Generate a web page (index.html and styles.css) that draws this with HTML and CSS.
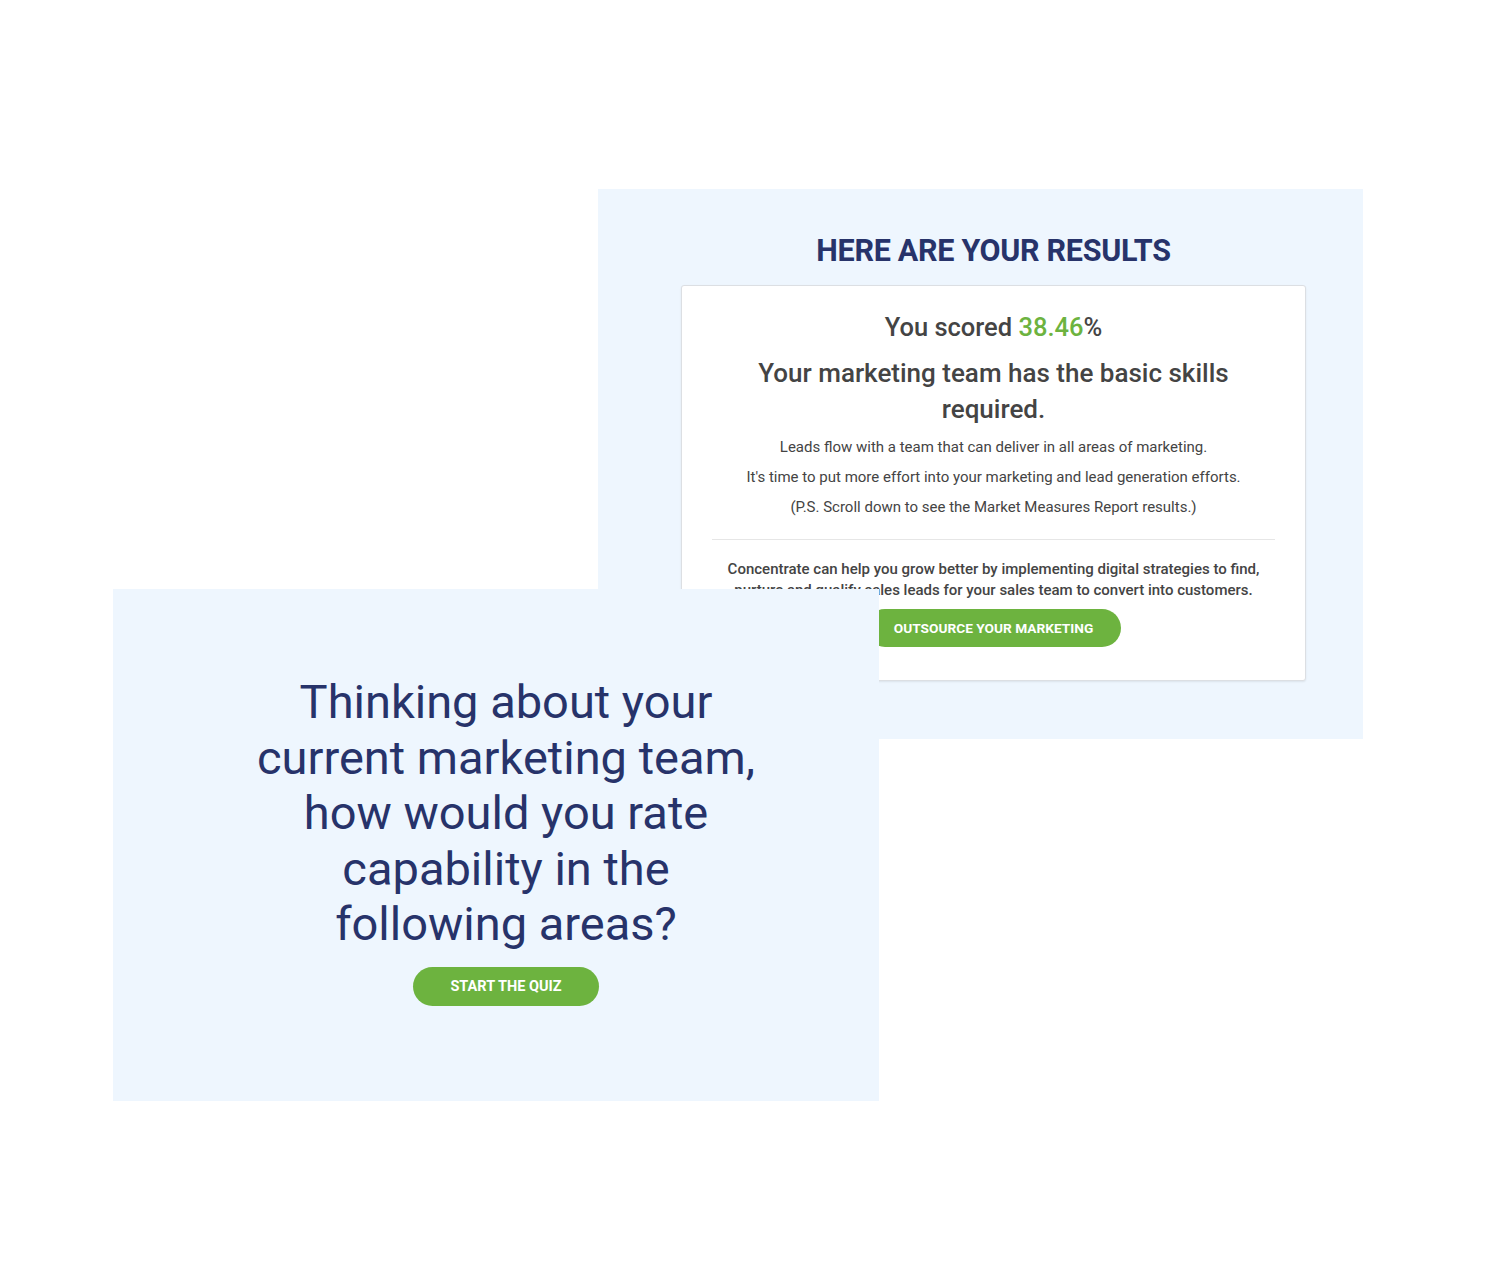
FILE: index.html
```html
<!DOCTYPE html>
<html>
<head>
    <meta charset="utf-8" />
    <title>Marketing Team Quiz</title>
    <link rel="stylesheet" href="styles.css">
</head>
<body>
<div class="stage">
    <section class="results">
        <h2 class="results-title">HERE ARE YOUR RESULTS</h2>
        <div class="results-card">
            <p class="score">You scored <span class="score-num">38.46</span>%</p>
            <h3 class="verdict">Your marketing team has the basic skills required.</h3>
            <p class="note">Leads flow with a team that can deliver in all areas of marketing.</p>
            <p class="note">It's time to put more effort into your marketing and lead generation efforts.</p>
            <p class="note">(P.S. Scroll down to see the Market Measures Report results.)</p>
            <hr class="divider">
            <p class="pitch">Concentrate can help you grow better by implementing digital strategies to find, nurture and qualify sales leads for your sales team to convert into customers.</p>
            <a class="btn" href="#">OUTSOURCE YOUR MARKETING</a>
        </div>
    </section>

    <section class="intro">
        <h1 class="intro-title">Thinking about your current marketing team, how would you rate capability in the following areas?</h1>
        <a class="btn btn-quiz" href="#">START THE QUIZ</a>
    </section>
</div>
</body>
</html>
```

FILE: styles.css
```css
html {
    background: #fff;
}

body {
    margin: 0;
    font-family: Roboto, "Liberation Sans", sans-serif;
    color: #444;
}

/* two panels on one canvas, the intro panel laid over the results panel */
.stage {
    display: grid;
    grid-template-columns: 113px 485px 281px 484px;
    grid-template-rows: 189px 400px 150px 362px;
}

.results {
    grid-column: 3 / 5;
    grid-row: 2 / 4;
    background: #eef6fe;
    padding: 43px 57px 0 83px;
    text-align: center;
}

.results-title {
    margin: 0 0 15px;
    font-size: 30.5px;
    line-height: 38px;
    font-weight: 700;
    color: #27336a;
    letter-spacing: -0.3px;
}

.results-card {
    background: #fff;
    border: 1px solid #dcdfe3;
    border-radius: 3px;
    box-shadow: 0 1px 2px rgba(0, 0, 0, 0.08);
    padding: 24px 30px 32px;
    height: 396px;
    box-sizing: border-box;
}

.score {
    margin: 0 0 11px;
    font-size: 25.5px;
    line-height: 34px;
    font-weight: 500;
    color: #444;
}

.score-num {
    color: #6db33f;
}

.verdict {
    margin: 0 0 5px;
    font-size: 26px;
    line-height: 36px;
    font-weight: 500;
    color: #444;
    padding: 0 30px;
}

.note {
    margin: 0;
    font-size: 15px;
    line-height: 30px;
    font-weight: 400;
    color: #444;
}

.divider {
    border: 0;
    border-top: 1px solid #e6e6e6;
    margin: 17px 0 19px;
}

.pitch {
    margin: 0 0 8px;
    font-size: 15px;
    line-height: 21px;
    font-weight: 500;
    color: #444;
}

.btn {
    display: inline-block;
    background: #6db33f;
    color: #fff;
    font-size: 13.7px;
    font-weight: 700;
    line-height: 38px;
    padding: 0 28px;
    border-radius: 20px;
    text-decoration: none;
}

.intro {
    grid-column: 2 / 4;
    grid-row: 3 / 5;
    background: #eef6fe;
    padding: 85px 0 0;
    text-align: center;
}

.intro-title {
    margin: 0 auto 15px;
    width: 520px;
    font-size: 47px;
    line-height: 55.5px;
    font-weight: 400;
    color: #27336a;
    position: relative;
    left: 10px;
}

.btn-quiz {
    font-size: 14.5px;
    line-height: 39px;
    padding: 0 37px;
    margin-left: 20px;
}
```
